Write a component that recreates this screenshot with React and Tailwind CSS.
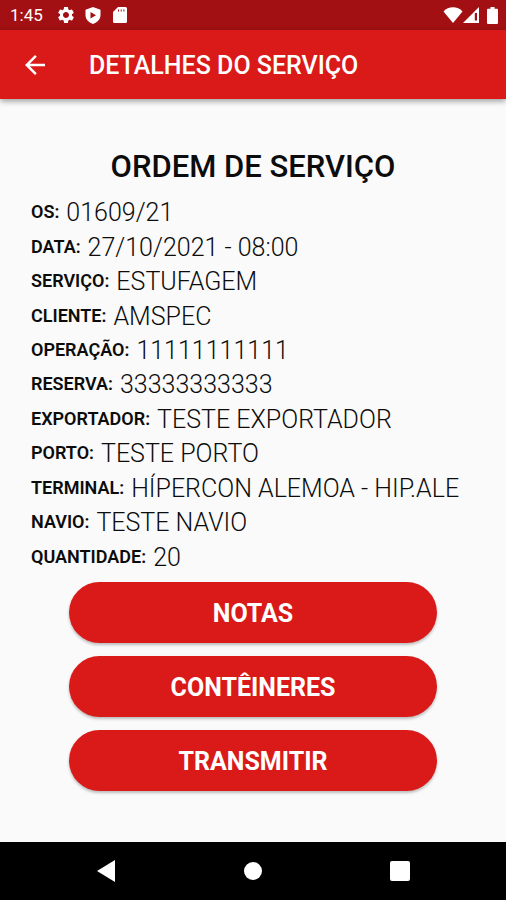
import { MdArrowBack, MdSettings } from "react-icons/md";

const details = [
  ["OS", "01609/21"],
  ["DATA", "27/10/2021 - 08:00"],
  ["SERVIÇO", "ESTUFAGEM"],
  ["CLIENTE", "AMSPEC"],
  ["OPERAÇÃO", "11111111111"],
  ["RESERVA", "33333333333"],
  ["EXPORTADOR", "TESTE EXPORTADOR"],
  ["PORTO", "TESTE PORTO"],
  ["TERMINAL", "HÍPERCON ALEMOA - HIP.ALE"],
  ["NAVIO", "TESTE NAVIO"],
  ["QUANTIDADE", "20"],
];

const actions = ["NOTAS", "CONTÊINERES", "TRANSMITIR"];

function StatusBar() {
  return (
    <div className="flex h-[30px] shrink-0 items-center justify-between bg-[#a31013] pl-2.5 pr-2 text-white">
      <div className="flex items-center">
        <span className="w-[46px] text-[17px] leading-[30px]">1:45</span>
        <MdSettings className="size-5" aria-hidden="true" />
        <svg className="ml-[9px] h-[17px] w-4" viewBox="0 0 16 17" fill="currentColor" aria-hidden="true">
          <path fillRule="evenodd" d="M8 0 15.5 2.8V8c0 4-3 7.600-7.500 9C3.500 15.600.5 12 .5 8V2.800ZM5.500 5v6.500L11 8.200Z" />
        </svg>
        <svg className="ml-3 h-4 w-[14px]" viewBox="0 0 14 16" fill="currentColor" aria-hidden="true">
          <path fillRule="evenodd" d="M5 0h7.500Q14 0 14 1.500v13q0 1.500-1.500 1.500h-11Q0 16 0 14.500V5ZM5 2.500v2h1V2.500ZM7.700 2.500v2h1V2.500ZM10.400 2.500v2h1V2.500Z" />
        </svg>
      </div>
      <div className="flex items-center">
        <svg className="h-4 w-5" viewBox="0 0 20 16" fill="currentColor" aria-hidden="true">
          <path d="M10 16 .5 4.500C3 1.700 6.300.3 10 .3s7 1.400 9.500 4.200Z" />
        </svg>
        <svg className="h-4 w-4" viewBox="0 0 16 16" fill="currentColor" aria-hidden="true">
          <path fillRule="evenodd" d="M16 0v16H0ZM14 6h-2.200v7.500h2.200Z" />
        </svg>
        <svg className="ml-2 h-[17px] w-[11px]" viewBox="0 0 11 17" fill="currentColor" aria-hidden="true">
          <path d="M3.500 0h4v1.700H10q1 0 1 1V16q0 1-1 1H1q-1 0-1-1V2.700q0-1 1-1h2.500Z" />
        </svg>
      </div>
    </div>
  );
}

function NavigationBar() {
  return (
    <nav className="grid h-[58px] shrink-0 grid-cols-3 items-center justify-items-center bg-black px-[33px] text-white">
      <button type="button" aria-label="Voltar" className="flex size-10 items-center justify-center">
        <svg className="h-[22px] w-[18px]" viewBox="0 0 18 22" fill="currentColor">
          <path d="M18 0v22L0 11Z" />
        </svg>
      </button>
      <button type="button" aria-label="Início" className="flex size-10 items-center justify-center">
        <span className="size-[18px] rounded-full bg-white" />
      </button>
      <button type="button" aria-label="Recentes" className="flex size-10 items-center justify-center">
        <span className="size-5 rounded-xs bg-white" />
      </button>
    </nav>
  );
}

export default function App() {
  return (
    <div className="flex min-h-screen flex-col bg-[#fafafa] font-['Roboto',sans-serif] text-[#0c0c0c]">
      <StatusBar />
      <header className="flex h-[69px] shrink-0 items-center bg-[#da1a18] pl-5 text-white shadow-[0_2px_6px_rgba(0,0,0,0.4)]">
        <button type="button" aria-label="Voltar" className="mr-[39px]">
          <MdArrowBack className="size-[30px]" />
        </button>
        <h1 className="pt-0.5 text-[25px] font-medium leading-8">DETALHES DO SERVIÇO</h1>
      </header>
      <main className="flex flex-1 flex-col pb-[51px] pt-12">
        <h2 className="text-center text-[31px] font-medium leading-10">ORDEM DE SERVIÇO</h2>
        <dl className="mb-2 mt-2 grid flex-1 auto-rows-fr px-[31px]">
          {details.map(([label, value]) => (
            <div key={label} className="flex items-center gap-[7px] whitespace-nowrap">
              <dt className="text-[18px] font-semibold leading-6">{label}:</dt>
              <dd className="pt-0.5 text-[25px] font-light leading-8">{value}</dd>
            </div>
          ))}
        </dl>
        <div className="flex flex-col gap-[13px] px-[69px]">
          {actions.map((action) => (
            <button
              key={action}
              type="button"
              className="h-[61px] rounded-full bg-[#da1a18] pt-0.5 text-[25px] font-bold leading-8 text-white shadow-[0_2px_3px_rgba(0,0,0,0.25)]"
            >
              {action}
            </button>
          ))}
        </div>
      </main>
      <NavigationBar />
    </div>
  );
}
